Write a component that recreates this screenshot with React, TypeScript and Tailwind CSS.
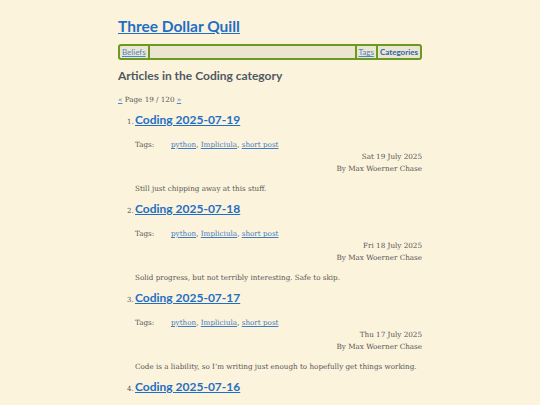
const posts = [
  { n: 1, title: 'Coding 2025-07-19', date: 'Sat 19 July 2025', summary: 'Still just chipping away at this stuff.' },
  { n: 2, title: 'Coding 2025-07-18', date: 'Fri 18 July 2025', summary: 'Solid progress, but not terribly interesting. Safe to skip.' },
  { n: 3, title: 'Coding 2025-07-17', date: 'Thu 17 July 2025', summary: 'Code is a liability, so I\u2019m writing just enough to hopefully get things working.' },
  { n: 4, title: 'Coding 2025-07-16', date: 'Wed 16 July 2025', summary: 'More of the same.' },
];

const heading = { fontFamily: 'Lato, "Noto Sans", sans-serif' };

export default function App() {
  return (
    <div className="h-[405px] overflow-hidden bg-[#fcf3dc] text-[#555] font-['DejaVu_Serif',serif]">
      <div className="mx-auto w-[304px] pt-[14px]">
        <h1 className="text-[15.5px] font-bold leading-[24px]" style={heading}>
          <a href="#" className="text-[#1f6fc5] underline">Three Dollar Quill</a>
        </h1>
        <nav
          className="mt-[6px] flex h-[16px] items-center rounded-[3px] border-2 border-[#6a9a22] bg-[#ece5cf] px-[2px] text-[8px]"
          style={heading}
        >
          <a href="#" className="border-r-2 border-[#6a9a22] pr-[2px] text-[#4a86c8] underline">Beliefs</a>
          <span className="flex-1" />
          <a href="#" className="border-l-2 border-[#6a9a22] px-[2px] text-[#4a86c8] underline">Tags</a>
          <a href="#" className="border-l-2 border-[#6a9a22] pl-[2px] font-bold text-[#2a66b0]">Categories</a>
        </nav>
        <h2 className="mt-[7px] text-[12px] font-bold leading-[18px] text-[#4f5a63]" style={heading}>
          Articles in the Coding category
        </h2>
        <p className="mt-[9px] text-[7.2px] leading-[12px]">
          <a href="#" className="text-[#4a86c8] underline">&laquo;</a> Page 19 / 120{' '}
          <a href="#" className="text-[#4a86c8] underline">&raquo;</a>
        </p>
        <ol className="mt-[4px]">
          {posts.map((p) => (
            <li key={p.n} className="pl-[17px] h-[89px]">
              <div className="flex items-baseline">
                <span className="-ml-[8px] w-[8px] text-[7px]">{p.n}.</span>
                <a
                  href="#"
                  className="text-[12px] font-bold leading-[20px] text-[#1f6fc5] underline"
                  style={heading}
                >
                  {p.title}
                </a>
              </div>
              <div className="mt-[9px] flex text-[7.2px] leading-[12px]">
                <span className="w-[36px]">Tags:</span>
                <span>
                  <a href="#" className="text-[#3f7cc0] underline">python</a>,{' '}
                  <a href="#" className="text-[#3f7cc0] underline">Impliciula</a>,{' '}
                  <a href="#" className="text-[#3f7cc0] underline">short post</a>
                </span>
              </div>
              <div className="text-right text-[7.2px] leading-[12px]">
                <div>{p.date}</div>
                <div>By Max Woerner Chase</div>
              </div>
              <p className="mt-[8px] text-[7.2px] leading-[12px]">{p.summary}</p>
            </li>
          ))}
        </ol>
      </div>
    </div>
  );
}
